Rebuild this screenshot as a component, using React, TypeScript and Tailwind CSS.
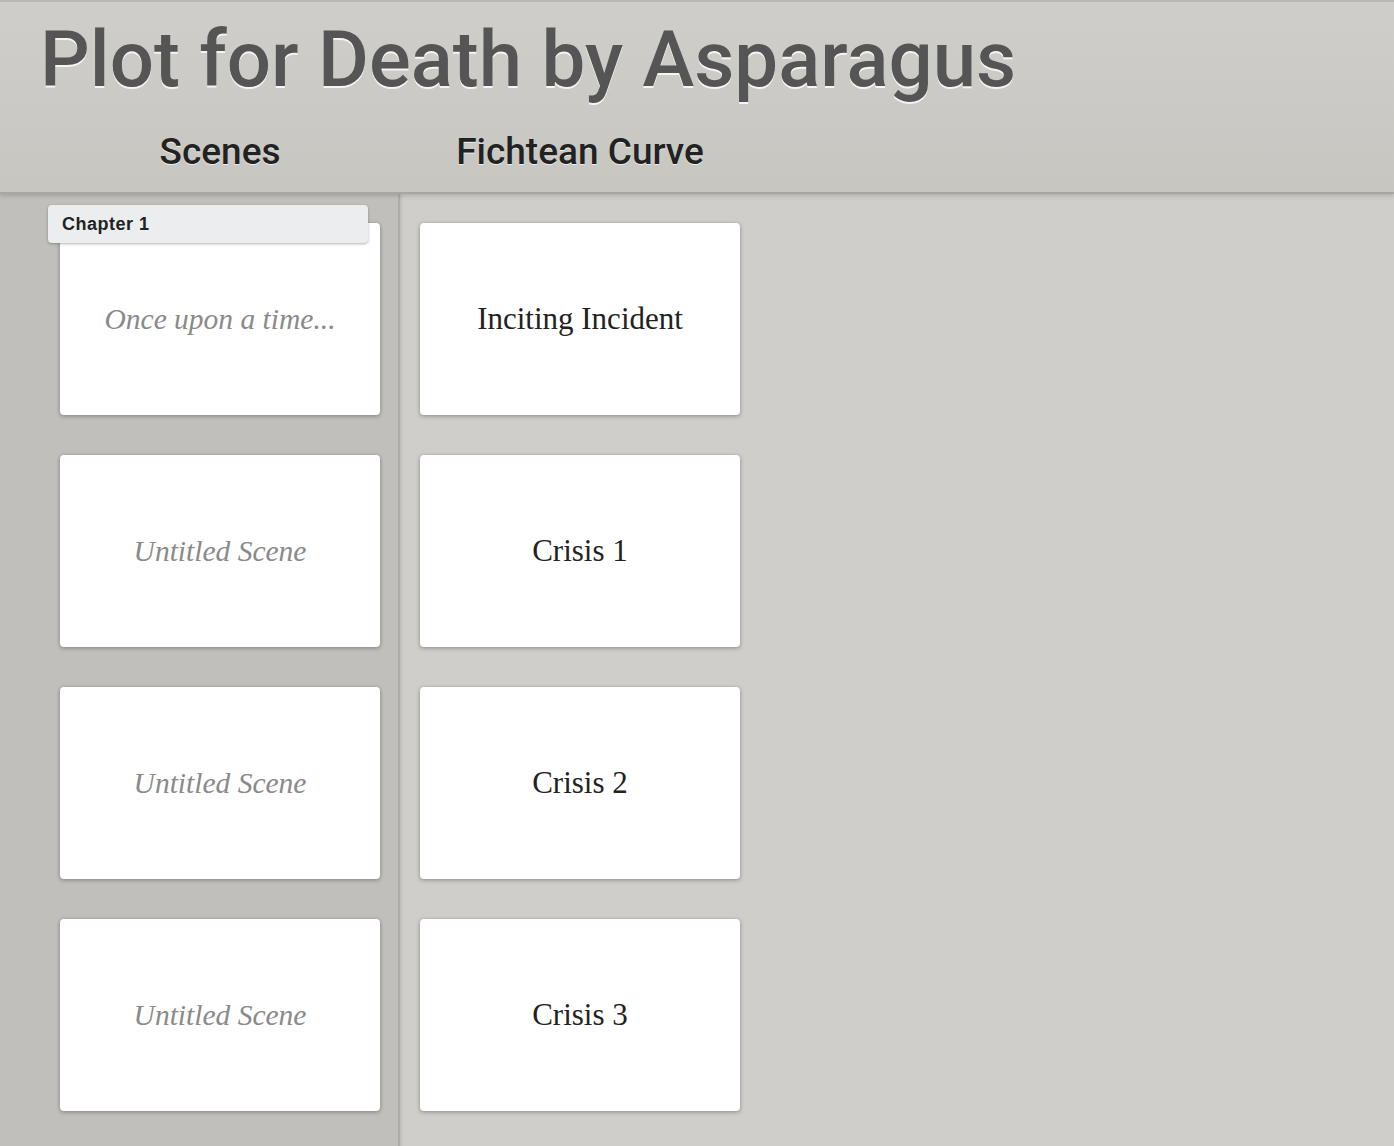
import React from 'react'

const SCENES = ['Once upon a time...', 'Untitled Scene', 'Untitled Scene', 'Untitled Scene']
const CURVE = ['Inciting Incident', 'Crisis 1', 'Crisis 2', 'Crisis 3']

function Card({ text, muted }: { text: string; muted?: boolean }) {
  return (
    <div className="flex h-[192px] w-[320px] items-center justify-center rounded-[4px] bg-white shadow-[0_1px_4px_rgba(0,0,0,0.35)]">
      <span
        className={
          muted
            ? 'text-[29.5px] italic text-[#8a8a8a]'
            : 'text-[31px] text-[#222]'
        }
        style={{ fontFamily: '"Liberation Serif", serif' }}
      >
        {text}
      </span>
    </div>
  )
}

export default function App() {
  return (
    <div
      className="flex min-h-screen flex-col bg-[#cfceca]"
      style={{ fontFamily: 'Roboto, "Liberation Sans", sans-serif' }}
    >
      {/* Header */}
      <header className="relative z-10 h-[194px] shrink-0 border-b-2 border-[#a8a7a3] bg-gradient-to-b from-[#cfceca] to-[#c7c6c1] shadow-[0_2px_4px_rgba(0,0,0,0.15)]">
        <div className="h-[2px] bg-[#b9b8b4]" />
        <h1 className="ml-[40px] mt-[12px] text-[78px] font-medium leading-[92px] text-[#555] [text-shadow:0_1.5px_0_rgba(255,255,255,0.8)]">
          Plot for Death by Asparagus
        </h1>
        <div className="mt-[24px] flex text-[37px] font-medium leading-[44px] text-[#222] [text-shadow:0_1px_0_rgba(255,255,255,0.7)]">
          <div className="w-[420px] pl-[60px] text-center">
            <div className="w-[320px]">Scenes</div>
          </div>
          <div className="w-[320px] text-center">Fichtean Curve</div>
        </div>
      </header>

      {/* Body */}
      <div className="flex flex-1">
        <div className="w-[400px] shrink-0 border-r-2 border-[#adaca8] bg-[#c0bfbb] pb-[40px] pl-[60px] pt-[29px] shadow-[1px_0_3px_rgba(0,0,0,0.12)]">
          <div className="flex flex-col gap-[40px]">
            {SCENES.map((s, i) => (
              <div key={i} className="relative">
                {i === 0 && (
                  <div className="absolute left-[-12px] top-[-18px] z-10 flex h-[38px] w-[320px] items-center rounded-[4px] bg-[#ecedef] pl-[14px] text-[18px] font-bold tracking-[0.5px] text-[#222] shadow-[0_1px_3px_rgba(0,0,0,0.3)]" style={{ fontFamily: '"Liberation Sans", sans-serif' }}>
                    Chapter 1
                  </div>
                )}
                <Card text={s} muted />
              </div>
            ))}
          </div>
        </div>
        <div className="flex flex-col gap-[40px] pl-[20px] pt-[29px]">
          {CURVE.map((c, i) => (
            <Card key={i} text={c} />
          ))}
        </div>
      </div>
    </div>
  )
}
